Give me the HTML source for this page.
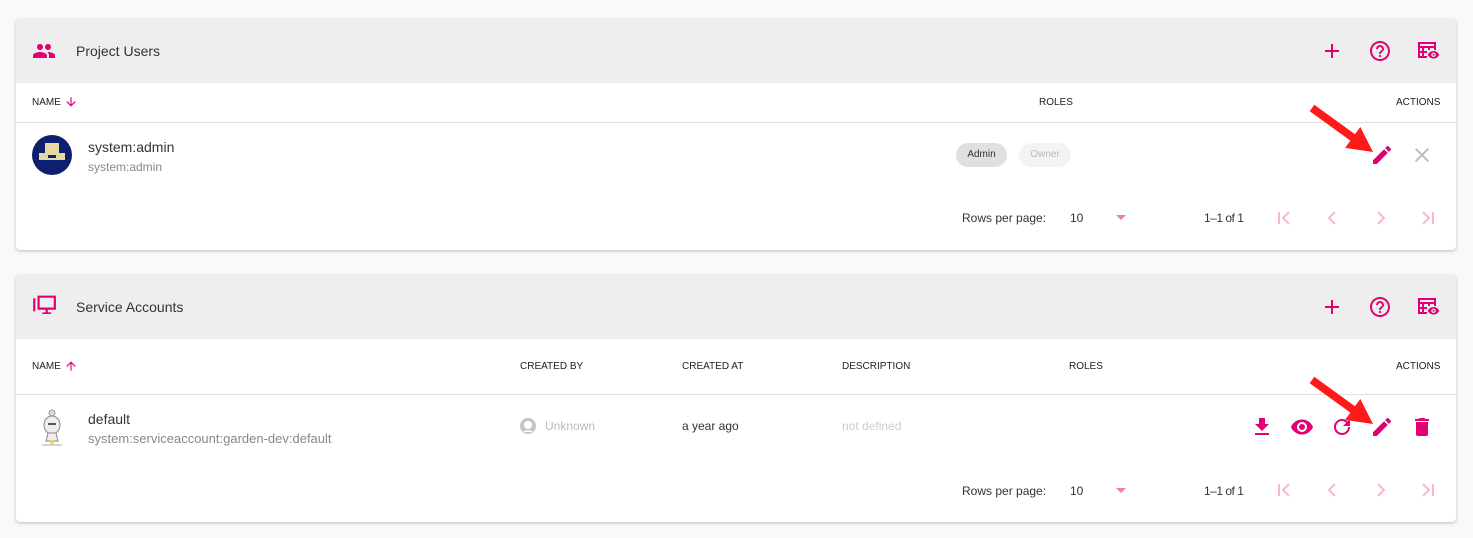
<!DOCTYPE html>
<html><head><style>
*{box-sizing:border-box;margin:0;padding:0}
body{width:1473px;height:538px;background:#f9f9f9;font-family:"Liberation Sans",sans-serif;position:relative;overflow:hidden;color:#222}
.card{position:absolute;left:16px;width:1440px;background:#fff;border-radius:4px;box-shadow:0 1px 3px rgba(0,0,0,.25);overflow:hidden}
.hdr{position:absolute;left:0;top:0;width:100%;height:64px;background:#eeeeee}
.a{position:absolute}
.th{font-size:10px;color:#222}
.line{position:absolute;left:0;width:100%;height:1px;background:#e0e0e0}
.p{fill:#e20074}
.lp{stroke:#f7b6d6;fill:none;stroke-width:2}
.ttl{font-size:14px;color:#333;top:24px;left:60px}
</style></head><body>

<!-- card 1 -->
<div class="card" style="top:19px;height:231px">
 <div class="hdr"></div>
 <svg class="a" style="left:16px;top:20px" width="24" height="24" viewBox="0 0 24 24"><path class="p" d="M16 11c1.66 0 2.99-1.34 2.99-3S17.66 5 16 5c-1.66 0-3 1.34-3 3s1.34 3 3 3zm-8 0c1.66 0 2.99-1.34 2.99-3S9.66 5 8 5C6.34 5 5 6.34 5 8s1.34 3 3 3zm0 2c-2.330 0-7 1.17-7 3.5V19h14v-2.5c0-2.33-4.67-3.5-7-3.5zm8 0c-.29 0-.62.02-.97.05 1.16.84 1.97 1.97 1.97 3.45V19h6v-2.5c0-2.33-4.67-3.5-7-3.5z"/></svg>
 <div class="a ttl">Project Users</div>
 <svg class="a" style="left:1304px;top:20px" width="24" height="24" viewBox="0 0 24 24"><path class="p" d="M19 13h-6v6h-2v-6H5v-2h6V5h2v6h6v2z"/></svg>
 <svg class="a" style="left:1352px;top:20px" width="24" height="24" viewBox="0 0 24 24"><path class="p" d="M11 18h2v-2h-2v2zm1-16C6.48 2 2 6.48 2 12s4.48 10 10 10 10-4.48 10-10S17.52 2 12 2zm0 18c-4.41 0-8-3.59-8-8s3.59-8 8-8 8 3.59 8 8-3.59 8-8 8zm0-14c-2.21 0-4 1.79-4 4h2c0-1.1.9-2 2-2s2 .9 2 2c0 2-3 1.75-3 5h2c0-2.25 3-2.5 3-5 0-2.21-1.79-4-4-4z"/></svg>
 <svg class="a" style="left:1400px;top:20px" width="24" height="24" viewBox="0 0 24 24"><path class="p" d="M2 3h18v8h-2V9h-4v2h-2V9H8v3h3v2H8v3h3v2H2zM4 9v3h2V9zm0 5v3h2v-3zM4 5v2h14V5z"/><path class="p" d="M17.5 12c-2.6 0-4.8 1.6-5.7 3.8.9 2.2 3.1 3.8 5.7 3.8s4.8-1.6 5.7-3.8c-.9-2.2-3.1-3.8-5.7-3.8zm0 6a2.2 2.2 0 110-4.4 2.2 2.2 0 010 4.4zm0-3.2a1 1 0 100 2 1 1 0 000-2z"/></svg>
 <div class="a th" style="left:16px;top:78px">NAME</div>
 <svg class="a" style="left:48px;top:76px" width="14" height="14" viewBox="0 0 24 24"><path class="p" d="M20 12l-1.41-1.41L13 16.17V4h-2v12.17l-5.58-5.59L4 12l8 8 8-8z"/></svg>
 <div class="a th" style="left:1023px;top:78px">ROLES</div>
 <div class="a th" style="left:1380px;top:78px">ACTIONS</div>
 <div class="line" style="top:103px"></div>
 <svg class="a" style="left:16px;top:116px" width="40" height="40" viewBox="0 0 40 40"><circle cx="20" cy="20" r="20" fill="#0d1f6e"/><rect x="13" y="8" width="14" height="10" fill="#e6d9a2"/><rect x="7" y="18" width="26" height="7" fill="#e6d9a2"/><rect x="16" y="20" width="8" height="3" fill="#0d1f6e"/></svg>
 <div class="a" style="left:72px;top:120px;font-size:14px;color:#333">system:admin</div>
 <div class="a" style="left:72px;top:141px;font-size:12px;color:#888">system:admin</div>
 <div class="a" style="left:940px;top:124px;width:51px;height:24px;border-radius:12px;background:#e0e0e0;font-size:10px;color:#333;text-align:center;line-height:24px">Admin</div>
 <div class="a" style="left:1003px;top:124px;width:52px;height:24px;border-radius:12px;background:#f3f3f3;font-size:10px;color:#bbb;text-align:center;line-height:24px">Owner</div>
 <svg class="a" style="left:1354px;top:124px" width="24" height="24" viewBox="0 0 24 24"><path class="p" d="M3 17.25V21h3.75L17.81 9.94l-3.75-3.75L3 17.25zM20.71 7.04a1 1 0 000-1.41l-2.34-2.34a1 1 0 00-1.41 0l-1.83 1.830 3.75 3.75 1.83-1.83z"/></svg>
 <svg class="a" style="left:1394px;top:124px" width="24" height="24" viewBox="0 0 24 24"><path fill="#bdbdbd" d="M19 6.41L17.59 5 12 10.59 6.41 5 5 6.41 10.59 12 5 17.59 6.41 19 12 13.41 17.59 19 19 17.59 13.41 12z"/></svg>
 <div class="a" style="left:946px;top:192px;font-size:12px;color:#333">Rows per page:</div>
 <div class="a" style="left:1054px;top:192px;font-size:12px;color:#333">10</div>
 <svg class="a" style="left:1100px;top:196px" width="10" height="6"><path d="M0 0h10L5 5z" fill="#ef7ab5"/></svg>
 <div class="a" style="left:1188px;top:192px;font-size:12px;color:#333;letter-spacing:-0.5px">1–1 of 1</div>
 <svg class="a" style="left:1258px;top:190px" width="170" height="18"><g class="lp"><path d="M5 3v12M15 3l-6 6 6 6"/><path d="M61 3l-6 6 6 6"/><path d="M104 3l6 6-6 6"/><path d="M149 3l6 6-6 6M159 3v12"/></g></svg>
</div>

<!-- card 2 -->
<div class="card" style="top:275px;height:247px">
 <div class="hdr"></div>
 <svg class="a" style="left:15px;top:19px" width="26" height="26" viewBox="0 0 24 24"><path fill="none" stroke="#e20074" stroke-width="2" d="M3 4v11h1M7 2.5h15v11H7z"/><path class="p" d="M13.5 14h2v3h3v1.5h-8V17h3z"/></svg>
 <div class="a ttl">Service Accounts</div>
 <svg class="a" style="left:1304px;top:20px" width="24" height="24" viewBox="0 0 24 24"><path class="p" d="M19 13h-6v6h-2v-6H5v-2h6V5h2v6h6v2z"/></svg>
 <svg class="a" style="left:1352px;top:20px" width="24" height="24" viewBox="0 0 24 24"><path class="p" d="M11 18h2v-2h-2v2zm1-16C6.48 2 2 6.48 2 12s4.48 10 10 10 10-4.48 10-10S17.52 2 12 2zm0 18c-4.41 0-8-3.59-8-8s3.59-8 8-8 8 3.59 8 8-3.59 8-8 8zm0-14c-2.21 0-4 1.79-4 4h2c0-1.1.9-2 2-2s2 .9 2 2c0 2-3 1.75-3 5h2c0-2.25 3-2.5 3-5 0-2.21-1.79-4-4-4z"/></svg>
 <svg class="a" style="left:1400px;top:20px" width="24" height="24" viewBox="0 0 24 24"><path class="p" d="M2 3h18v8h-2V9h-4v2h-2V9H8v3h3v2H8v3h3v2H2zM4 9v3h2V9zm0 5v3h2v-3zM4 5v2h14V5z"/><path class="p" d="M17.5 12c-2.6 0-4.8 1.6-5.7 3.8.9 2.2 3.1 3.8 5.7 3.8s4.8-1.6 5.7-3.8c-.9-2.2-3.1-3.8-5.7-3.8zm0 6a2.2 2.2 0 110-4.4 2.2 2.2 0 010 4.4zm0-3.2a1 1 0 100 2 1 1 0 000-2z"/></svg>
 <div class="a th" style="left:16px;top:86px">NAME</div>
 <svg class="a" style="left:48px;top:84px" width="14" height="14" viewBox="0 0 24 24"><path class="p" d="M4 12l1.41 1.41L11 7.83V20h2V7.83l5.58 5.59L20 12l-8-8-8 8z"/></svg>
 <div class="a th" style="left:504px;top:86px">CREATED BY</div>
 <div class="a th" style="left:666px;top:86px">CREATED AT</div>
 <div class="a th" style="left:826px;top:86px">DESCRIPTION</div>
 <div class="a th" style="left:1053px;top:86px">ROLES</div>
 <div class="a th" style="left:1380px;top:86px">ACTIONS</div>
 <div class="line" style="top:119px"></div>
 <svg class="a" style="left:22px;top:134px" width="28" height="38" viewBox="0 0 28 38"><circle cx="14" cy="4" r="3" fill="#ddd" stroke="#999"/><ellipse cx="14" cy="16" rx="8" ry="9" fill="#eee" stroke="#888"/><rect x="10" y="14" width="8" height="2" fill="#555"/><path d="M10 24l-2 8h12l-2-8z" fill="#eee" stroke="#888"/><path d="M4 36h20" stroke="#aaa"/><circle cx="14" cy="33" r="2" fill="#f2d24a"/></svg>
 <div class="a" style="left:72px;top:136px;font-size:14px;color:#333">default</div>
 <div class="a" style="left:72px;top:156px;font-size:13px;color:#888">system:serviceaccount:garden-dev:default</div>
 <svg class="a" style="left:504px;top:143px" width="16" height="16" viewBox="0 0 16 16"><circle cx="8" cy="8" r="8" fill="#c4c4c4"/><circle cx="8" cy="7" r="4" fill="#fff"/><path d="M3 14a6 4 0 0110 0z" fill="#fff"/></svg>
 <div class="a" style="left:529px;top:144px;font-size:12px;color:#bbb">Unknown</div>
 <div class="a" style="left:666px;top:144px;font-size:12px;color:#333">a year ago</div>
 <div class="a" style="left:826px;top:144px;font-size:12px;color:#ccc">not defined</div>
 <svg class="a" style="left:1234px;top:140px" width="24" height="24" viewBox="0 0 24 24"><path class="p" d="M19 9h-4V3H9v6H5l7 7 7-7zM5 18v2h14v-2H5z"/></svg>
 <svg class="a" style="left:1274px;top:140px" width="24" height="24" viewBox="0 0 24 24"><path class="p" d="M12 4.5C7 4.5 2.73 7.61 1 12c1.73 4.39 6 7.5 11 7.5s9.27-3.11 11-7.5c-1.73-4.39-6-7.5-11-7.5zM12 17a5 5 0 110-10 5 5 0 010 10zm0-8a3 3 0 100 6 3 3 0 000-6z"/></svg>
 <svg class="a" style="left:1314px;top:140px" width="24" height="24" viewBox="0 0 24 24"><path class="p" d="M17.65 6.35A7.958 7.958 0 0012 4a8 8 0 108 8h-2a6 6 0 11-1.76-4.24L13 11h7V4l-2.35 2.35z"/></svg>
 <svg class="a" style="left:1354px;top:140px" width="24" height="24" viewBox="0 0 24 24"><path class="p" d="M3 17.25V21h3.75L17.81 9.94l-3.75-3.75L3 17.25zM20.71 7.04a1 1 0 000-1.41l-2.34-2.34a1 1 0 00-1.41 0l-1.83 1.83 3.75 3.75 1.83-1.83z"/></svg>
 <svg class="a" style="left:1394px;top:140px" width="24" height="24" viewBox="0 0 24 24"><path class="p" d="M6 19a2 2 0 002 2h8a2 2 0 002-2V7H6v12zM19 4h-3.5l-1-1h-5l-1 1H5v2h14V4z"/></svg>
 <div class="a" style="left:946px;top:209px;font-size:12px;color:#333">Rows per page:</div>
 <div class="a" style="left:1054px;top:209px;font-size:12px;color:#333">10</div>
 <svg class="a" style="left:1100px;top:213px" width="10" height="6"><path d="M0 0h10L5 5z" fill="#ef7ab5"/></svg>
 <div class="a" style="left:1188px;top:209px;font-size:12px;color:#333;letter-spacing:-0.5px">1–1 of 1</div>
 <svg class="a" style="left:1258px;top:206px" width="170" height="18"><g class="lp"><path d="M5 3v12M15 3l-6 6 6 6"/><path d="M61 3l-6 6 6 6"/><path d="M104 3l6 6-6 6"/><path d="M149 3l6 6-6 6M159 3v12"/></g></svg>
</div>

<!-- red arrows -->
<svg class="a" style="left:0;top:0" width="1473" height="538">
 <g fill="#ff1a1a">
  <path d="M1314.3 104.8L1355 134.2 1360.3 126.9 1373 152 1345.1 147.9 1350.4 140.6 1309.7 111.2z"/>
  <path transform="translate(0 272)" d="M1314.3 104.8L1355 134.2 1360.3 126.9 1373 152 1345.1 147.9 1350.4 140.6 1309.7 111.2z"/>
 </g>
</svg>
</body></html>
